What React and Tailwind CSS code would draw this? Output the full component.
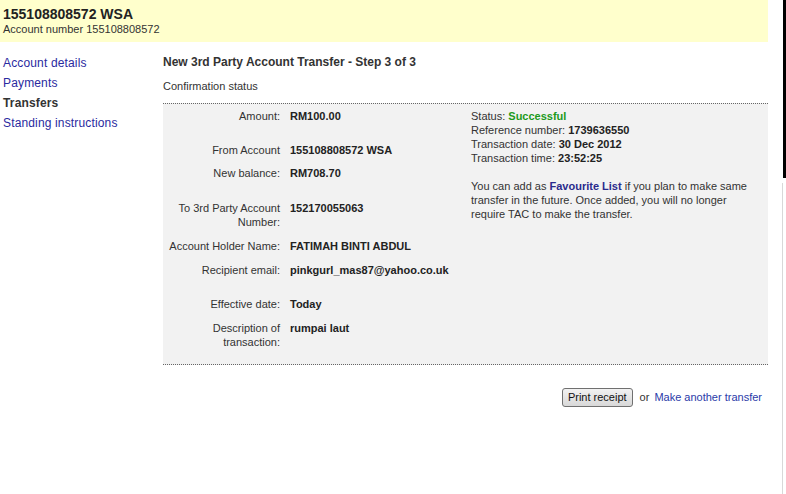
import React from "react";

const rows = [
  { label: "Amount:", value: "RM100.00", h: "h-[34px]" },
  { label: "From Account", value: "155108808572 WSA", h: "h-[23px]" },
  { label: "New balance:", value: "RM708.70", h: "h-[35px]" },
  { label: ["To 3rd Party Account", "Number:"], value: "152170055063", h: "h-[38px]" },
  { label: "Account Holder Name:", value: "FATIMAH BINTI ABDUL", h: "h-[24px]" },
  { label: "Recipient email:", value: "pinkgurl_mas87@yahoo.co.uk", h: "h-[34px]" },
  { label: "Effective date:", value: "Today", h: "h-[24px]" },
  { label: ["Description of", "transaction:"], value: "rumpai laut", h: "h-[43px]" },
];

export default function App() {
  return (
    <div
      className="flex h-[494px] w-[786px] bg-white text-[#333]"
      style={{ fontFamily: '"Liberation Sans", Arial, sans-serif' }}
    >
      <div className="flex w-[768px] shrink-0 flex-col">
        <div className="h-[42px] bg-[#ffffcc] pl-[3px] pt-[6px]">
          <div className="text-[14px] font-bold leading-[16px] text-[#222]">155108808572 WSA</div>
          <div className="text-[11px] leading-[14px] text-[#333]">Account number 155108808572</div>
        </div>
        <div className="flex">
          <nav className="flex w-[163px] shrink-0 flex-col pl-[3px] pt-[11px] text-[12px] leading-[20px] tracking-[0.15px]">
            <span className="text-[#2a2aa0]">Account details</span>
            <span className="text-[#2a2aa0]">Payments</span>
            <span className="font-bold text-[#333]">Transfers</span>
            <span className="text-[#2a2aa0]">Standing instructions</span>
          </nav>
          <main className="flex flex-1 flex-col pt-[13px]">
            <h1 className="text-[12px] font-bold leading-[14px] text-[#333]">
              New 3rd Party Account Transfer - Step 3 of 3
            </h1>
            <div className="mt-[10px] text-[11px] leading-[14px] text-[#333]">Confirmation status</div>
            <div className="mt-[10px] flex border-y border-dotted border-[#666] bg-[#f2f2f2] pt-[5px] text-[11px] leading-[14px]">
              <div className="flex w-[308px] shrink-0 flex-col">
                {rows.map((r, i) => (
                  <div key={i} className={`flex ${r.h}`}>
                    <div className="w-[117px] shrink-0 whitespace-nowrap text-right text-[#333]">
                      {Array.isArray(r.label) ? (
                        <>
                          {r.label[0]}
                          <br />
                          {r.label[1]}
                        </>
                      ) : (
                        r.label
                      )}
                    </div>
                    <div className="ml-[10px] whitespace-nowrap font-bold text-[#222]">{r.value}</div>
                  </div>
                ))}
              </div>
              <div className="flex flex-col whitespace-nowrap text-[#333]">
                <div>
                  Status: <span className="font-bold text-[#1c9a1c]">Successful</span>
                </div>
                <div>
                  Reference number: <span className="font-bold text-[#222]">1739636550</span>
                </div>
                <div>
                  Transaction date: <span className="font-bold text-[#222]">30 Dec 2012</span>
                </div>
                <div>
                  Transaction time: <span className="font-bold text-[#222]">23:52:25</span>
                </div>
                <div className="mt-[14px]">
                  You can add as <span className="font-bold text-[#2a2a8c]">Favourite List</span> if you plan to make same
                  <br />
                  transfer in the future. Once added, you will no longer
                  <br />
                  require TAC to make the transfer.
                </div>
              </div>
            </div>
            <div className="mt-[23px] flex items-center justify-end pr-[6px] text-[11px]">
              <button className="h-[19px] rounded-[3px] border border-[#707070] bg-gradient-to-b from-[#f2f2f2] to-[#d8d8d8] px-[5px] text-[11px] leading-[15px] text-[#111]">
                Print receipt
              </button>
              <span className="ml-[7px] text-[#333]">or</span>
              <span className="ml-[5px] text-[#2a3aa8]">Make another transfer</span>
            </div>
          </main>
        </div>
      </div>
      <div className="ml-auto flex w-[4px] flex-col">
        <div className="ml-[1px] h-[178px] w-[3px] bg-black" />
        <div className="mt-[5px] w-[1px] flex-1 bg-[#d8d8d8]" />
      </div>
    </div>
  );
}
